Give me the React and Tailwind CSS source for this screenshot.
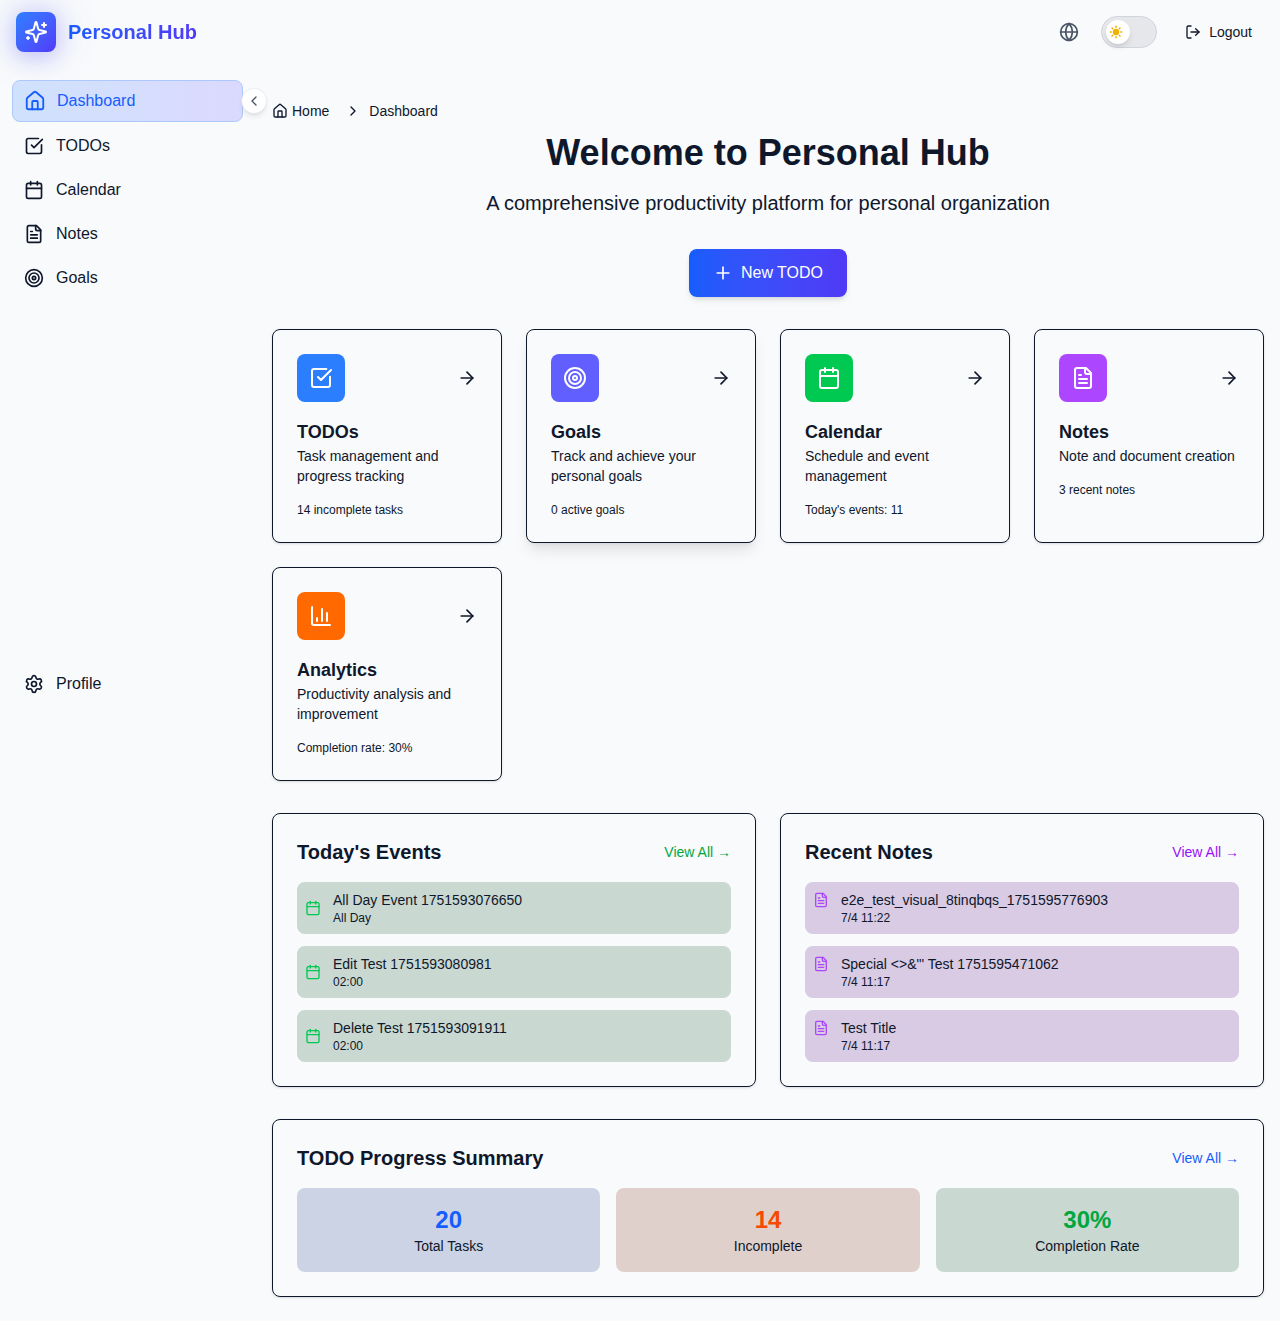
import {
  ArrowRight,
  Calendar,
  ChartColumn,
  ChevronLeft,
  ChevronRight,
  Globe,
  House,
  LogOut,
  Plus,
  Settings,
  SquareCheckBig,
  Target,
} from "lucide-react";

function Icon({ className, children }) {
  return (
    <svg
      className={className}
      viewBox="0 0 24 24"
      fill="none"
      stroke="currentColor"
      strokeWidth="2"
      strokeLinecap="round"
      strokeLinejoin="round"
    >
      {children}
    </svg>
  );
}

function FileText({ className }) {
  return (
    <Icon className={className}>
      <path d="M15 2H6a2 2 0 0 0-2 2v16a2 2 0 0 0 2 2h12a2 2 0 0 0 2-2V7Z" />
      <path d="M14 2v4a2 2 0 0 0 2 2h4" />
      <path d="M10 9H8" />
      <path d="M16 13H8" />
      <path d="M16 17H8" />
    </Icon>
  );
}

function Sparkles({ className }) {
  return (
    <Icon className={className}>
      <path d="M9.937 15.5A2 2 0 0 0 8.5 14.063l-6.135-1.582a.5.5 0 0 1 0-.962L8.5 9.936A2 2 0 0 0 9.937 8.5l1.582-6.135a.5.5 0 0 1 .963 0L14.063 8.5A2 2 0 0 0 15.5 9.937l6.135 1.581a.5.5 0 0 1 0 .964L15.5 14.063a2 2 0 0 0-1.437 1.437l-1.582 6.135a.5.5 0 0 1-.963 0z" />
      <path d="M20 3v4" />
      <path d="M22 5h-4" />
      <path d="M4 17v2" />
      <path d="M5 18H3" />
    </Icon>
  );
}

function Sun({ className }) {
  return (
    <svg className={className} viewBox="0 0 20 20" fill="currentColor">
      <path
        fillRule="evenodd"
        clipRule="evenodd"
        d="M10 2a1 1 0 011 1v1a1 1 0 11-2 0V3a1 1 0 011-1zm4 8a4 4 0 11-8 0 4 4 0 018 0zm-.464 4.95l.707.707a1 1 0 001.414-1.414l-.707-.707a1 1 0 00-1.414 1.414zm2.12-10.607a1 1 0 010 1.414l-.706.707a1 1 0 11-1.414-1.414l.707-.707a1 1 0 011.414 0zM17 11a1 1 0 100-2h-1a1 1 0 100 2h1zm-7 4a1 1 0 011 1v1a1 1 0 11-2 0v-1a1 1 0 011-1zM5.05 6.464A1 1 0 106.465 5.05l-.708-.707a1 1 0 00-1.414 1.414l.707.707zm1.414 8.486l-.707.707a1 1 0 01-1.414-1.414l.707-.707a1 1 0 011.414 1.414zM4 11a1 1 0 100-2H3a1 1 0 000 2h1z"
      />
    </svg>
  );
}

const navItems = [
  { label: "TODOs", icon: SquareCheckBig },
  { label: "Calendar", icon: Calendar },
  { label: "Notes", icon: FileText },
  { label: "Goals", icon: Target },
];

const features = [
  { title: "TODOs", text: "Task management and progress tracking", stat: "14 incomplete tasks", icon: SquareCheckBig, color: "bg-blue-500", shadow: "shadow-sm" },
  { title: "Goals", text: "Track and achieve your personal goals", stat: "0 active goals", icon: Target, color: "bg-[#615fff]", shadow: "shadow-lg" },
  { title: "Calendar", text: "Schedule and event management", stat: "Today's events: 11", icon: Calendar, color: "bg-green-500", shadow: "shadow-sm" },
  { title: "Notes", text: "Note and document creation", stat: "3 recent notes", icon: FileText, color: "bg-purple-500", shadow: "shadow-sm" },
  { title: "Analytics", text: "Productivity analysis and improvement", stat: "Completion rate: 30%", icon: ChartColumn, color: "bg-[#ff6900]", shadow: "shadow-sm" },
];

const events = [
  { title: "All Day Event 1751593076650", time: "All Day" },
  { title: "Edit Test 1751593080981", time: "02:00" },
  { title: "Delete Test 1751593091911", time: "02:00" },
];

const notes = [
  { title: "e2e_test_visual_8tinqbqs_1751595776903", time: "7/4 11:22" },
  { title: "Special <>&\"' Test 1751595471062", time: "7/4 11:17" },
  { title: "Test Title", time: "7/4 11:17" },
];

const stats = [
  { value: "20", label: "Total Tasks", bg: "bg-[#ccd3e5]", color: "text-blue-600" },
  { value: "14", label: "Incomplete", bg: "bg-[#e0d0cc]", color: "text-orange-600" },
  { value: "30%", label: "Completion Rate", bg: "bg-[#c9d8d0]", color: "text-green-600" },
];

function Header() {
  return (
    <header className="flex h-16 items-center justify-between px-4">
      <div className="flex items-center gap-3">
        <div className="flex size-10 items-center justify-center rounded-lg bg-linear-to-br from-blue-500 to-indigo-600 text-white shadow-[0_0_40px_rgba(99,102,241,0.25),0_4px_20px_rgba(79,70,246,0.25)]">
          <Sparkles className="size-6" />
        </div>
        <span className="bg-linear-to-r from-blue-600 to-indigo-600 bg-clip-text text-xl font-bold text-transparent">
          Personal Hub
        </span>
      </div>
      <div className="flex items-center">
        <Globe className="mr-[22px] size-5 text-gray-600" />
        <div className="mr-7 flex h-8 w-14 items-center rounded-full border border-gray-300 bg-gray-200 px-1">
          <div className="flex size-6 items-center justify-center rounded-full bg-white pr-1 shadow-md">
            <Sun className="size-4 text-[#f0b100]" />
          </div>
        </div>
        <div className="mr-3 flex items-center gap-2 text-sm">
          <LogOut className="size-4" />
          Logout
        </div>
      </div>
    </header>
  );
}

function Sidebar() {
  return (
    <aside className="flex h-[656px] w-64 shrink-0 flex-col justify-between pt-4 pr-[13px] pb-4 pl-3">
      <nav className="flex flex-col gap-1">
        <div className="relative flex h-[42px] items-center gap-3 rounded-lg border border-[#adc8fd] bg-linear-to-r from-[#cfe2fd] to-[#dbd9fd] px-3 text-blue-600">
          <House className="size-5 scale-110" />
          Dashboard
          <button className="absolute top-2 -right-6 flex size-6 items-center justify-center rounded-full bg-white text-gray-600 shadow-md ring-1 ring-gray-200/60">
            <ChevronLeft className="size-4" />
          </button>
        </div>
        {navItems.map(({ label, icon: NavIcon }) => (
          <div key={label} className="flex h-10 items-center gap-3 px-3">
            <NavIcon className="size-5" />
            {label}
          </div>
        ))}
      </nav>
      <div className="flex h-10 items-center gap-3 px-3">
        <Settings className="size-5" />
        Profile
      </div>
    </aside>
  );
}

function Panel({ title, linkColor, children }) {
  return (
    <section className="rounded-lg border border-slate-900 p-6 shadow-sm">
      <div className="mb-4 flex items-center justify-between">
        <h2 className="text-xl font-semibold">{title}</h2>
        <a className={"text-sm " + linkColor}>View All →</a>
      </div>
      {children}
    </section>
  );
}

export default function App() {
  return (
    <div className="min-h-[1321px] bg-slate-50 font-['Liberation_Sans',sans-serif] text-slate-900">
      <Header />
      <div className="flex">
        <Sidebar />
        <main className="min-w-0 flex-1 px-4 pt-[37px] pb-6">
          <div className="mb-3 flex h-5 items-center text-sm">
            <House className="mr-1 size-4" />
            Home
            <ChevronRight className="mr-2 ml-4 size-4" />
            Dashboard
          </div>
          <div className="mb-8 flex flex-col items-center">
            <h1 className="mb-4 text-4xl font-bold">Welcome to Personal Hub</h1>
            <p className="mb-8 text-xl">A comprehensive productivity platform for personal organization</p>
            <button className="flex h-12 items-center gap-2 rounded-lg bg-linear-to-r from-blue-600 to-indigo-600 px-6 text-white shadow-md">
              <Plus className="size-5" />
              New TODO
            </button>
          </div>

          <div className="mb-8 grid grid-cols-4 gap-6">
            {features.map(({ title, text, stat, icon: CardIcon, color, shadow }) => (
              <div key={title} className={"rounded-lg border border-slate-900 bg-slate-50 p-6 " + shadow}>
                <div className="mb-4 flex items-center justify-between">
                  <div className={"flex size-12 items-center justify-center rounded-lg text-white " + color}>
                    <CardIcon className="size-6" />
                  </div>
                  <ArrowRight className="size-5" />
                </div>
                <h3 className="text-lg font-semibold">{title}</h3>
                <p className="mb-4 text-sm">{text}</p>
                <p className="text-xs">{stat}</p>
              </div>
            ))}
          </div>

          <div className="mb-8 grid grid-cols-2 gap-6">
            <Panel title="Today's Events" linkColor="text-green-600">
              <div className="flex flex-col gap-3">
                {events.map((e) => (
                  <div key={e.title} className="flex items-center gap-3 rounded-lg bg-[#c9d8d0] p-2">
                    <Calendar className="size-4 text-green-500" />
                    <div>
                      <p className="text-sm">{e.title}</p>
                      <p className="text-xs">{e.time}</p>
                    </div>
                  </div>
                ))}
              </div>
            </Panel>
            <Panel title="Recent Notes" linkColor="text-purple-600">
              <div className="flex flex-col gap-3">
                {notes.map((n) => (
                  <div key={n.title} className="flex items-start gap-3 rounded-lg bg-[#d8cbe3] p-2">
                    <FileText className="mt-0.5 size-4 text-purple-500" />
                    <div>
                      <p className="text-sm">{n.title}</p>
                      <p className="text-xs">{n.time}</p>
                    </div>
                  </div>
                ))}
              </div>
            </Panel>
          </div>

          <Panel title="TODO Progress Summary" linkColor="text-blue-600">
            <div className="grid grid-cols-3 gap-4">
              {stats.map((s) => (
                <div key={s.label} className={"rounded-lg p-4 text-center " + s.bg}>
                  <p className={"text-2xl font-bold " + s.color}>{s.value}</p>
                  <p className="text-sm">{s.label}</p>
                </div>
              ))}
            </div>
          </Panel>
        </main>
      </div>
    </div>
  );
}
